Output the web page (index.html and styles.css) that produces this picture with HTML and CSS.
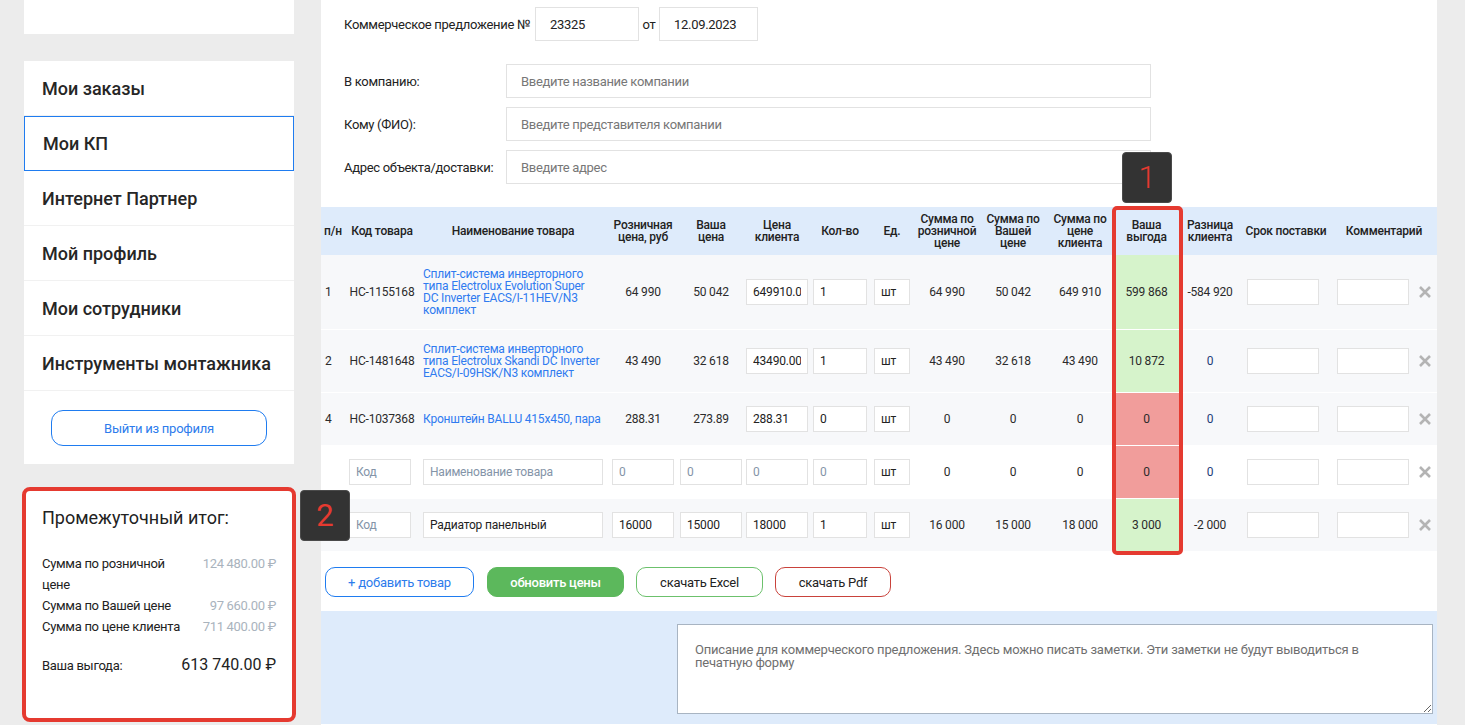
FILE: index.html
```html
<!DOCTYPE html>
<html lang="ru">
<head>
<meta charset="utf-8">
<title>Мои КП</title>
<link rel="stylesheet" href="styles.css">
</head>
<body>
<div class="page">
  <aside class="sidebar">
    <div class="sb-top"></div>
    <nav class="menu">
      <a class="menu-item">Мои заказы</a>
      <a class="menu-item active">Мои КП</a>
      <a class="menu-item">Интернет Партнер</a>
      <a class="menu-item">Мой профиль</a>
      <a class="menu-item">Мои сотрудники</a>
      <a class="menu-item">Инструменты монтажника</a>
      <button class="logout">Выйти из профиля</button>
    </nav>
    <section class="summary">
      <h2 class="summary-title">Промежуточный итог:</h2>
      <div class="sum-rows">
        <span class="sum-label">Сумма по розничной цене</span><span class="sum-val">124 480.00 ₽</span>
        <span class="sum-label">Сумма по Вашей цене</span><span class="sum-val">97 660.00 ₽</span>
        <span class="sum-label">Сумма по цене клиента</span><span class="sum-val">711 400.00 ₽</span>
      </div>
      <div class="profit"><span class="profit-label">Ваша выгода:</span><span class="profit-val">613 740.00 ₽</span></div>
      <div class="badge badge-2">2</div>
    </section>
  </aside>

  <main class="main">
    <div class="form">
      <div class="kp-row">
        <span class="kp-label">Коммерческое предложение №</span>
        <input class="field kp-no" value="23325">
        <span class="ot">от</span>
        <input class="field kp-date" value="12.09.2023">
      </div>
      <div class="fields">
        <label class="f-label">В компанию:</label>
        <input class="field f-input" placeholder="Введите название компании">
        <label class="f-label">Кому (ФИО):</label>
        <input class="field f-input" placeholder="Введите представителя компании">
        <label class="f-label">Адрес объекта/доставки:</label>
        <input class="field f-input" placeholder="Введите адрес">
      </div>
    </div>

    <div class="table-wrap">
      <table class="kp">
        <colgroup>
          <col style="width:25px"><col style="width:72px"><col style="width:190px"><col style="width:70px">
          <col style="width:66px"><col style="width:66px"><col style="width:60px"><col style="width:44px">
          <col style="width:66px"><col style="width:66px"><col style="width:68px"><col style="width:65px">
          <col style="width:62px"><col style="width:90px"><col style="width:84px"><col style="width:22px">
        </colgroup>
        <thead>
          <tr>
            <th class="c-num">п/н</th>
            <th>Код товара</th>
            <th>Наименование товара</th>
            <th>Розничная<br>цена, руб</th>
            <th>Ваша<br>цена</th>
            <th>Цена<br>клиента</th>
            <th>Кол-во</th>
            <th>Ед.</th>
            <th>Сумма по<br>розничной<br>цене</th>
            <th>Сумма по<br>Вашей<br>цене</th>
            <th>Сумма по<br>цене<br>клиента</th>
            <th>Ваша<br>выгода</th>
            <th>Разница<br>клиента</th>
            <th>Срок поставки</th>
            <th colspan="2">Комментарий</th>
          </tr>
        </thead>
        <tbody>
          <tr>
            <td class="c-num">1</td>
            <td>НС-1155168</td>
            <td class="c-name"><a class="link">Сплит-система инверторного<br>типа Electrolux Evolution Super<br>DC Inverter EACS/I-11HEV/N3<br>комплект</a></td>
            <td>64 990</td>
            <td>50 042</td>
            <td><input class="cell-in w62" value="649910.00"></td>
            <td><input class="cell-in w54" value="1"></td>
            <td><input class="cell-in w36" value="шт"></td>
            <td>64 990</td>
            <td>50 042</td>
            <td>649 910</td>
            <td class="g">599 868</td>
            <td>-584 920</td>
            <td class="c-in"><input class="cell-in w72"></td>
            <td class="c-in"><input class="cell-in w72"></td>
            <td class="c-del"><svg width="14" height="14" viewBox="0 0 14 14"><path d="M2 2 L12 12 M12 2 L2 12" stroke="#b4b4b4" stroke-width="2.6" fill="none"/></svg></td>
          </tr>
          <tr>
            <td class="c-num">2</td>
            <td>НС-1481648</td>
            <td class="c-name"><a class="link">Сплит-система инверторного<br>типа Electrolux Skandi DC Inverter<br>EACS/I-09HSK/N3 комплект</a></td>
            <td>43 490</td>
            <td>32 618</td>
            <td><input class="cell-in w62" value="43490.00"></td>
            <td><input class="cell-in w54" value="1"></td>
            <td><input class="cell-in w36" value="шт"></td>
            <td>43 490</td>
            <td>32 618</td>
            <td>43 490</td>
            <td class="g">10 872</td>
            <td class="zero">0</td>
            <td class="c-in"><input class="cell-in w72"></td>
            <td class="c-in"><input class="cell-in w72"></td>
            <td class="c-del"><svg width="14" height="14" viewBox="0 0 14 14"><path d="M2 2 L12 12 M12 2 L2 12" stroke="#b4b4b4" stroke-width="2.6" fill="none"/></svg></td>
          </tr>
          <tr>
            <td class="c-num">4</td>
            <td>НС-1037368</td>
            <td class="c-name"><a class="link">Кронштейн BALLU 415x450, пара</a></td>
            <td>288.31</td>
            <td>273.89</td>
            <td><input class="cell-in w62" value="288.31"></td>
            <td><input class="cell-in w54" value="0"></td>
            <td><input class="cell-in w36" value="шт"></td>
            <td>0</td>
            <td>0</td>
            <td>0</td>
            <td class="r">0</td>
            <td class="zero">0</td>
            <td class="c-in"><input class="cell-in w72"></td>
            <td class="c-in"><input class="cell-in w72"></td>
            <td class="c-del"><svg width="14" height="14" viewBox="0 0 14 14"><path d="M2 2 L12 12 M12 2 L2 12" stroke="#b4b4b4" stroke-width="2.6" fill="none"/></svg></td>
          </tr>
          <tr class="white">
            <td class="c-num"></td>
            <td class="c-code"><input class="cell-in w62" placeholder="Код"></td>
            <td class="c-name"><input class="cell-in w180" placeholder="Наименование товара"></td>
            <td><input class="cell-in w62" placeholder="0"></td>
            <td><input class="cell-in w62" placeholder="0"></td>
            <td><input class="cell-in w62" placeholder="0"></td>
            <td><input class="cell-in w54" placeholder="0"></td>
            <td><input class="cell-in w36" value="шт"></td>
            <td>0</td>
            <td>0</td>
            <td>0</td>
            <td class="r">0</td>
            <td class="zero">0</td>
            <td class="c-in"><input class="cell-in w72"></td>
            <td class="c-in"><input class="cell-in w72"></td>
            <td class="c-del"><svg width="14" height="14" viewBox="0 0 14 14"><path d="M2 2 L12 12 M12 2 L2 12" stroke="#b4b4b4" stroke-width="2.6" fill="none"/></svg></td>
          </tr>
          <tr>
            <td class="c-num"></td>
            <td class="c-code"><input class="cell-in w62" placeholder="Код"></td>
            <td class="c-name"><input class="cell-in w180" value="Радиатор панельный"></td>
            <td><input class="cell-in w62" value="16000"></td>
            <td><input class="cell-in w62" value="15000"></td>
            <td><input class="cell-in w62" value="18000"></td>
            <td><input class="cell-in w54" value="1"></td>
            <td><input class="cell-in w36" value="шт"></td>
            <td>16 000</td>
            <td>15 000</td>
            <td>18 000</td>
            <td class="g">3 000</td>
            <td>-2 000</td>
            <td class="c-in"><input class="cell-in w72"></td>
            <td class="c-in"><input class="cell-in w72"></td>
            <td class="c-del"><svg width="14" height="14" viewBox="0 0 14 14"><path d="M2 2 L12 12 M12 2 L2 12" stroke="#b4b4b4" stroke-width="2.6" fill="none"/></svg></td>
          </tr>
        </tbody>
      </table>
      <div class="col-highlight"></div>
    </div>

    <div class="actions">
      <button class="btn btn-add">+ добавить товар</button>
      <button class="btn btn-refresh">обновить цены</button>
      <button class="btn btn-excel">скачать Excel</button>
      <button class="btn btn-pdf">скачать Pdf</button>
    </div>

    <div class="notes">
      <textarea class="notes-area" placeholder="Описание для коммерческого предложения. Здесь можно писать заметки. Эти заметки не будут выводиться в печатную форму"></textarea>
    </div>

    <div class="badge badge-1">1</div>
  </main>
</div>
</body>
</html>
```

FILE: styles.css
```css
* { box-sizing: border-box; }
html, body { margin: 0; padding: 0; }
body {
  background: #ececec;
  font-family: Roboto, "Liberation Sans", Arial, sans-serif;
  color: #222;
  width: 1465px;
  height: 725px;
  overflow: hidden;
}
.page {
  display: flex;
  align-items: flex-start;
  padding-left: 24px;
  gap: 27px;
}

/* Sidebar */
.sidebar { width: 270px; flex: none; position: relative; z-index: 2; }
.sb-top { height: 34px; background: #fff; margin-bottom: 27px; }
.menu { background: #fff; padding-bottom: 18px; }
.menu-item {
  display: flex;
  align-items: center;
  height: 55px;
  padding-left: 18px;
  font-size: 18px;
  font-weight: 500;
  color: #262626;
  border-bottom: 1px solid #f1f1f1;
  text-decoration: none;
}
.menu-item.active { border: 1px solid #1f7cf0; }
.logout {
  display: block;
  margin: 19px 0 0 27px;
  width: 216px;
  height: 36px;
  border: 1px solid #1f7cf0;
  border-radius: 12px;
  background: #fff;
  color: #2d7cec;
  font-family: Roboto, "Liberation Sans", Arial, sans-serif;
  font-size: 13px;
  letter-spacing: -0.25px;
}

.summary {
  position: relative;
  margin-top: 25px;
  height: 231px;
  background: #fff;
  padding: 18px 18px 0;
  outline: 4px solid #e53a30;
  outline-offset: -2px;
  border-radius: 6px;
}
.summary-title {
  margin: 0;
  font-size: 18px;
  font-weight: 400;
  line-height: 21px;
  color: #222;
}
.sum-rows {
  display: grid;
  grid-template-columns: 1fr auto;
  column-gap: 10px;
  margin-top: 25px;
  font-size: 13px;
  line-height: 21px;
  letter-spacing: -0.3px;
}
.sum-label { color: #222; }
.sum-val { color: #a9b3bd; text-align: right; }
.profit {
  display: flex;
  justify-content: space-between;
  align-items: baseline;
  margin-top: 17px;
  line-height: 21px;
}
.profit-label { font-size: 13px; letter-spacing: -0.3px; }
.profit-val { font-size: 16px; color: #222; }

.badge {
  position: absolute;
  width: 50px;
  height: 51px;
  background: #333;
  border: 1px solid #4a4a4a;
  border-radius: 4px;
  color: #e53a30;
  font-size: 31px;
  display: flex;
  align-items: center;
  justify-content: center;
  z-index: 10;
}
.badge-2 { left: 276px; top: 1px; }
.badge-1 { left: 801px; top: 152px; font-weight: 300; }

/* Main */
.main {
  position: relative;
  width: 1116px;
  flex: none;
  background: #fff;
  min-height: 725px;
}
.form { padding: 7px 0 0 23px; font-size: 13px; letter-spacing: -0.3px; }
.kp-row { display: flex; align-items: center; height: 34px; }
.kp-label { width: 191px; flex: none; white-space: nowrap; }
.field {
  height: 34px;
  border: 1px solid #e2e2e2;
  background: #fff;
  padding: 0 14px;
  font-family: Roboto, "Liberation Sans", Arial, sans-serif;
  font-size: 13px;
  letter-spacing: -0.3px;
  color: #222;
  outline: none;
}
.field::placeholder { color: #777; }
.kp-no { width: 104px; }
.ot { width: 20px; text-align: center; }
.kp-date { width: 99px; }
.fields {
  display: grid;
  grid-template-columns: 162px 645px;
  row-gap: 9px;
  align-items: center;
  margin-top: 23px;
}
.f-label { white-space: nowrap; }

/* Table */
.table-wrap { position: relative; margin-top: 23px; }
.kp {
  border-collapse: collapse;
  table-layout: fixed;
  width: 1116px;
  font-size: 12px;
}
.kp th {
  background: #deebfb;
  font-weight: 500;
  line-height: 12px;
  height: 48px;
  padding: 0 1px;
  text-align: center;
  vertical-align: middle;
  color: #222;
  letter-spacing: -0.2px;
}
.kp td {
  padding: 13px 2px;
  line-height: 12px;
  text-align: center;
  vertical-align: middle;
  border-bottom: 1px solid #fff;
  color: #2b2b2b;
  letter-spacing: -0.2px;
  white-space: nowrap;
}
.kp tbody tr { background: #f7f8fa; }
.kp tbody tr.white { background: #fff; }
.kp .c-num { text-align: left; padding-left: 4px; }
.kp th.c-num { padding-left: 3px; }
.kp .c-name { text-align: left; padding-left: 5px; padding-right: 0; }
.kp td.c-code { text-align: left; padding-left: 3px; }
.kp td.c-in { text-align: left; padding-left: 6px; }
.link { color: #2f7bf0; text-decoration: none; }
.kp td.g { background: #d6f3cb; }
.kp td.r { background: #f19d9b; }
.kp td.zero { color: #1d3c78; }
.kp td.c-del { padding: 0; }
.kp td.c-del svg { display: block; margin: 0 0 0 3px; }

.cell-in {
  display: inline-block;
  vertical-align: middle;
  height: 26px;
  border: 1px solid #e2e2e2;
  background: #fff;
  padding: 0 6px;
  font-family: Roboto, "Liberation Sans", Arial, sans-serif;
  font-size: 12px;
  letter-spacing: -0.2px;
  color: #222;
  outline: none;
}
.cell-in::placeholder { color: #8494a8; }
.w36 { width: 36px; }
.w54 { width: 54px; }
.w62 { width: 62px; }
.w72 { width: 72px; }
.w180 { width: 180px; }

.col-highlight {
  position: absolute;
  left: 791px;
  top: -1px;
  width: 71px;
  height: 349px;
  border: 4px solid #e53a30;
  border-radius: 5px;
  pointer-events: none;
}

/* Actions */
.actions {
  display: flex;
  gap: 12px;
  padding: 15px 0 14px 4px;
}
.btn {
  height: 30px;
  padding: 0;
  border-radius: 10px;
  border: 1px solid #ccc;
  background: #fff;
  font-family: Roboto, "Liberation Sans", Arial, sans-serif;
  font-size: 13px;
  letter-spacing: -0.25px;
  color: #222;
}
.btn-add { width: 149px; border-color: #1f7cf0; color: #2d7cec; }
.btn-refresh { width: 137px; border-color: #5cb85c; background: #5cb85c; color: #fff; font-weight: 500; margin-left: 1px; }
.btn-excel { width: 127px; border-color: #6cc16c; }
.btn-pdf { width: 116px; border-color: #c9423b; }

/* Notes */
.notes {
  background: #deebfb;
  display: flex;
  justify-content: flex-end;
  padding: 13px 4px 10px 0;
}
.notes-area {
  width: 756px;
  height: 90px;
  border: 1px solid #a8b4c2;
  background: #fff;
  padding: 18px 40px 18px 17px;
  font-family: Roboto, "Liberation Sans", Arial, sans-serif;
  font-size: 13px;
  line-height: 13px;
  letter-spacing: -0.2px;
  color: #222;
  outline: none;
}
.notes-area::placeholder { color: #6f6f6f; }
```
